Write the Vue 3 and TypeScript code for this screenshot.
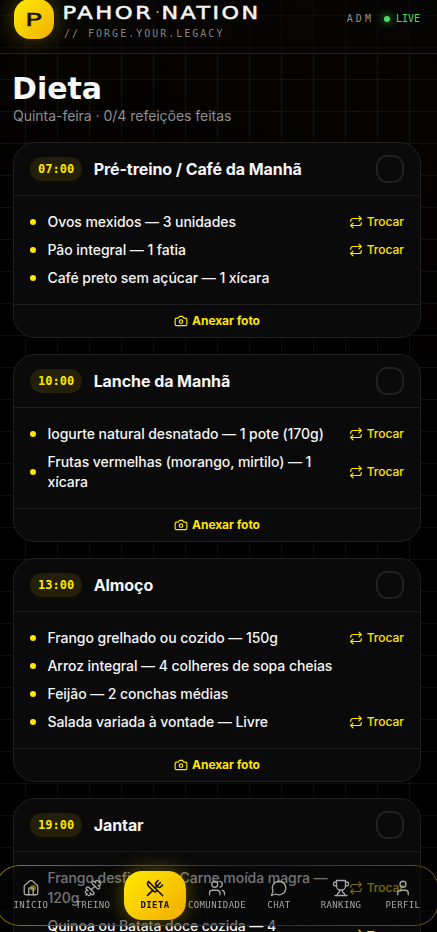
<script setup lang="ts">
import { ref } from 'vue'

interface Food {
  text: string
  swap: boolean
}
interface Meal {
  time: string
  name: string
  foods: Food[]
}
interface NavItem {
  label: string
  paths: string[]
  circle?: [number, number, number]
}

const meals: Meal[] = [
  {
    time: '07:00',
    name: 'Pré-treino / Café da Manhã',
    foods: [
      { text: 'Ovos mexidos — 3 unidades', swap: true },
      { text: 'Pão integral — 1 fatia', swap: true },
      { text: 'Café preto sem açúcar — 1 xícara', swap: false },
    ],
  },
  {
    time: '10:00',
    name: 'Lanche da Manhã',
    foods: [
      { text: 'Iogurte natural desnatado — 1 pote (170g)', swap: true },
      { text: 'Frutas vermelhas (morango, mirtilo) — 1 xícara', swap: true },
    ],
  },
  {
    time: '13:00',
    name: 'Almoço',
    foods: [
      { text: 'Frango grelhado ou cozido — 150g', swap: true },
      { text: 'Arroz integral — 4 colheres de sopa cheias', swap: false },
      { text: 'Feijão — 2 conchas médias', swap: false },
      { text: 'Salada variada à vontade — Livre', swap: true },
    ],
  },
  {
    time: '19:00',
    name: 'Jantar',
    foods: [
      { text: 'Frango desfiado ou Carne moída magra — 120g', swap: true },
      { text: 'Quinoa ou Batata doce cozida — 4 colheres', swap: true },
    ],
  },
]

const navItems: NavItem[] = [
  {
    label: 'INÍCIO',
    paths: [
      'M15 21v-8a1 1 0 0 0-1-1h-4a1 1 0 0 0-1 1v8',
      'M3 10a2 2 0 0 1 .709-1.528l7-5.999a2 2 0 0 1 2.582 0l7 5.999A2 2 0 0 1 21 10v9a2 2 0 0 1-2 2H5a2 2 0 0 1-2-2z',
    ],
  },
  {
    label: 'TREINO',
    paths: [
      'M17.596 12.768a2 2 0 1 0 2.829-2.829l-1.768-1.767a2 2 0 0 0 2.828-2.829l-2.828-2.828a2 2 0 0 0-2.829 2.828l-1.767-1.768a2 2 0 1 0-2.829 2.829z',
      'm2.5 21.5 1.4-1.4',
      'm20.1 3.9 1.4-1.4',
      'M5.343 21.485a2 2 0 1 0 2.829-2.828l1.767 1.768a2 2 0 1 0 2.829-2.829l-6.364-6.364a2 2 0 1 0-2.829 2.829l1.768 1.767a2 2 0 0 0-2.828 2.829z',
      'm9.6 14.4 4.8-4.8',
    ],
  },
  {
    label: 'DIETA',
    paths: [
      'm16 2-2.3 2.3a3 3 0 0 0 0 4.2l1.8 1.8a3 3 0 0 0 4.2 0L22 8',
      'M15 15 3.3 3.3a4.2 4.2 0 0 0 0 6l7.3 7.3c.7.7 2 .7 2.8 0L15 15Zm0 0 7 7',
      'm2.1 21.8 6.4-6.3',
      'm19 5-7 7',
    ],
  },
  {
    label: 'COMUNIDADE',
    paths: [
      'M16 21v-2a4 4 0 0 0-4-4H6a4 4 0 0 0-4 4v2',
      'M22 21v-2a4 4 0 0 0-3-3.87',
      'M16 3.13a4 4 0 0 1 0 7.75',
    ],
    circle: [9, 7, 4],
  },
  { label: 'CHAT', paths: ['M7.9 20A9 9 0 1 0 4 16.1L2 22Z'] },
  {
    label: 'RANKING',
    paths: [
      'M6 9H4.5a2.5 2.5 0 0 1 0-5H6',
      'M18 9h1.5a2.5 2.5 0 0 0 0-5H18',
      'M4 22h16',
      'M10 14.66V17c0 .55-.47.98-.97 1.21C7.85 18.75 7 20.24 7 22',
      'M14 14.66V17c0 .55.47.98.97 1.21C16.15 18.75 17 20.24 17 22',
      'M18 2H6v7a6 6 0 0 0 12 0V2Z',
    ],
  },
  {
    label: 'PERFIL',
    paths: ['M19 21v-2a4 4 0 0 0-4-4H9a4 4 0 0 0-4 4v2'],
    circle: [12, 7, 4],
  },
]

const active = ref('DIETA')
</script>

<template>
  <div class="page">
    <header class="topbar">
      <div class="logo">
        <svg width="16" height="16" viewBox="0 0 16 16">
          <text x="-1" y="15" textLength="17" lengthAdjust="spacingAndGlyphs">P</text>
        </svg>
      </div>
      <div class="brand">
        <svg class="wordmark" width="196" height="20" viewBox="0 0 196 20">
          <text x="-1.5" y="16" textLength="91" lengthAdjust="spacingAndGlyphs">PAHOR</text>
          <text class="dot" x="91" y="15">·</text>
          <text x="97.5" y="16" textLength="99" lengthAdjust="spacingAndGlyphs">NATION</text>
        </svg>
        <div class="tagline">// FORGE.YOUR.LEGACY</div>
      </div>
      <div class="status">
        <span class="role">ADM</span>
        <span class="live"><i></i>LIVE</span>
      </div>
    </header>

    <main class="content">
      <h1>Dieta</h1>
      <p class="subtitle">Quinta-feira · 0/4 refeições feitas</p>

      <div class="meals">
        <section v-for="meal in meals" :key="meal.time" class="card">
          <div class="card-head">
            <span class="time">{{ meal.time }}</span>
            <h2>{{ meal.name }}</h2>
            <button class="check" type="button"></button>
          </div>
          <ul>
            <li v-for="food in meal.foods" :key="food.text">
              <i class="bullet"></i>
              <span class="food">{{ food.text }}</span>
              <button v-if="food.swap" class="swap" type="button">
                <svg class="icon" width="14" height="14" viewBox="0 0 24 24">
                  <path d="m17 2 4 4-4 4" />
                  <path d="M3 11v-1a4 4 0 0 1 4-4h14" />
                  <path d="m7 22-4-4 4-4" />
                  <path d="M21 13v1a4 4 0 0 1-4 4H3" />
                </svg>
                Trocar
              </button>
            </li>
          </ul>
          <button class="photo" type="button">
            <svg class="icon" width="14" height="14" viewBox="0 0 24 24">
              <path d="M14.5 4h-5L7 7H4a2 2 0 0 0-2 2v9a2 2 0 0 0 2 2h16a2 2 0 0 0 2-2V9a2 2 0 0 0-2-2h-3l-2.5-3z" />
              <circle cx="12" cy="13" r="3" />
            </svg>
            Anexar foto
          </button>
        </section>
      </div>
    </main>

    <nav class="tabs">
      <a v-for="item in navItems" :key="item.label" :class="{ active: item.label === active }" @click="active = item.label">
        <svg class="icon" width="18" height="18" viewBox="0 0 24 24">
          <path v-for="d in item.paths" :key="d" :d="d" />
          <circle v-if="item.circle" :cx="item.circle[0]" :cy="item.circle[1]" :r="item.circle[2]" />
        </svg>
        <span>{{ item.label }}</span>
      </a>
    </nav>
  </div>
</template>

<style>
body {
  background: #000;
  overflow: hidden;
}
</style>

<style scoped>
.page {
  height: 932px;
  overflow: hidden;
  position: relative;
  font-family: Inter, sans-serif;
  color: #f5f5f5;
  background:
    linear-gradient(to right, rgba(255, 255, 255, 0.055) 1px, transparent 1px) 25px 0 / 32px 32px,
    linear-gradient(to bottom, rgba(255, 255, 255, 0.055) 1px, transparent 1px) 0 15px / 32px 32px,
    radial-gradient(ellipse 380px 300px at 20% 0, rgba(255, 190, 0, 0.025), transparent),
    radial-gradient(ellipse 300px 380px at 100% 12%, rgba(255, 190, 0, 0.018), transparent),
    #000;
}
button {
  appearance: none;
  background: none;
  border: 0;
  padding: 0;
  font-family: inherit;
}
.icon {
  fill: none;
  stroke: currentColor;
  stroke-width: 2;
  stroke-linecap: round;
  stroke-linejoin: round;
  flex: none;
}
.topbar {
  display: flex;
  align-items: flex-start;
  height: 53px;
  padding: 0 17px 0 14px;
  border-bottom: 1px solid #22211f;
  background: rgba(5, 5, 3, 0.5);
}
.logo {
  display: flex;
  align-items: center;
  justify-content: center;
  width: 40px;
  height: 40px;
  margin-top: -1px;
  border-radius: 16px;
  background: linear-gradient(135deg, #ffea00, #f0b000);
  box-shadow: 0 0 22px rgba(255, 220, 0, 0.3);
}
.logo svg {
  overflow: visible;
}
.logo text {
  font: 400 18px 'DejaVu Sans', sans-serif;
  fill: #15130a;
  stroke: #15130a;
  stroke-width: 0.4px;
}
.brand {
  margin: 3px 0 0 10px;
}
.wordmark {
  display: block;
  overflow: visible;
}
.wordmark text {
  font: 400 18px 'DejaVu Sans', sans-serif;
  letter-spacing: 2px;
  fill: #f5f5f5;
  stroke: #f5f5f5;
  stroke-width: 0.5px;
}
.wordmark .dot {
  font-size: 15px;
  fill: #d9a800;
  stroke: none;
}
.tagline {
  margin-top: 4px;
  font: 10px/14px 'DejaVu Sans Mono', monospace;
  letter-spacing: 2px;
  color: #85847e;
  white-space: nowrap;
}
.status {
  display: flex;
  align-items: center;
  gap: 13px;
  margin: 12px 0 0 auto;
  font: 10px/14px 'DejaVu Sans Mono', monospace;
}
.role {
  color: #909090;
  letter-spacing: 3px;
  margin-right: -3px;
}
.live {
  display: flex;
  align-items: center;
  gap: 6px;
  color: #4ade5c;
}
.live i {
  width: 6px;
  height: 6px;
  border-radius: 50%;
  background: #4ade5c;
  box-shadow: 0 0 8px #4ade5c;
}
.content {
  padding: 17px 16px 0 13px;
}
h1 {
  margin: 0 0 0 -1px;
  font: 700 30px/36px 'DejaVu Sans', sans-serif;
  color: #f8f8f8;
}
.subtitle {
  margin: -1px 0 0;
  font-size: 14px;
  line-height: 20px;
  letter-spacing: -0.03px;
  color: #8f8f8f;
}
.meals {
  display: flex;
  flex-direction: column;
  gap: 16px;
  margin-top: 16px;
}
.card {
  border: 1px solid #202020;
  border-radius: 22px;
  background: #0a0a0a;
  overflow: hidden;
}
.card-head {
  display: flex;
  align-items: center;
  gap: 12px;
  padding: 12px 16px;
  border-bottom: 1px solid #1c1c1c;
}
.time {
  padding: 0 8px;
  border-radius: 12px;
  background: #231f08;
  color: #ffe600;
  font: 700 12px/24px 'DejaVu Sans Mono', monospace;
}
h2 {
  flex: 1;
  margin: 0 0 0 -0.5px;
  font-size: 16px;
  font-weight: 700;
  line-height: 24px;
  letter-spacing: -0.07px;
}
.check {
  box-sizing: border-box;
  width: 28px;
  height: 28px;
  border: 2px solid #202020;
  border-radius: 11px;
}
ul {
  display: flex;
  flex-direction: column;
  gap: 8px;
  margin: 0;
  padding: 16px;
  list-style: none;
}
li {
  display: flex;
  align-items: center;
  gap: 12px;
}
.bullet {
  flex: none;
  width: 6px;
  height: 6px;
  border-radius: 50%;
  background: #ffe600;
}
.food {
  flex: 1;
  margin-left: -0.5px;
  font-size: 14px;
  font-weight: 500;
  line-height: 20px;
  letter-spacing: -0.06px;
}
.swap,
.photo {
  display: flex;
  align-items: center;
  gap: 4px;
  color: #ffe600;
  font-size: 12px;
  line-height: 16px;
  font-weight: 500;
}
.photo {
  width: 100%;
  justify-content: center;
  padding: 8px 0;
  border-top: 1px solid #1c1c1c;
  font-weight: 700;
  letter-spacing: -0.06px;
}
.tabs {
  position: fixed;
  left: -5px;
  top: 865px;
  box-sizing: border-box;
  display: flex;
  width: 444px;
  height: 61px;
  padding: 6px 5px;
  border-radius: 24px;
  background: rgba(8, 8, 8, 0.55);
}
.tabs::before {
  content: '';
  position: absolute;
  inset: 0;
  padding: 1px;
  border-radius: 24px;
  background: linear-gradient(100deg, #8f8200, #4b4510 35%, #2b2a20 60%, #665d0b);
  mask: linear-gradient(#000 0 0) content-box exclude, linear-gradient(#000 0 0);
  pointer-events: none;
}
.tabs a {
  position: relative;
  display: flex;
  flex-direction: column;
  align-items: center;
  gap: 2px;
  width: 62px;
  height: 49px;
  box-sizing: border-box;
  padding-top: 8px;
  border-radius: 18px;
  color: #a6a6a6;
}
.tabs span {
  font: 9px/12px 'DejaVu Sans Mono', monospace;
  letter-spacing: 0.4px;
}
.tabs .icon {
  stroke-width: 1.75;
}
.tabs .active {
  color: #141000;
  background: linear-gradient(135deg, #ffea00, #f0ac00);
  box-shadow: 0 0 20px rgba(255, 220, 0, 0.35);
}
.tabs .active .icon {
  stroke-width: 2.2;
}
.tabs .active span {
  font-weight: 700;
}
</style>
